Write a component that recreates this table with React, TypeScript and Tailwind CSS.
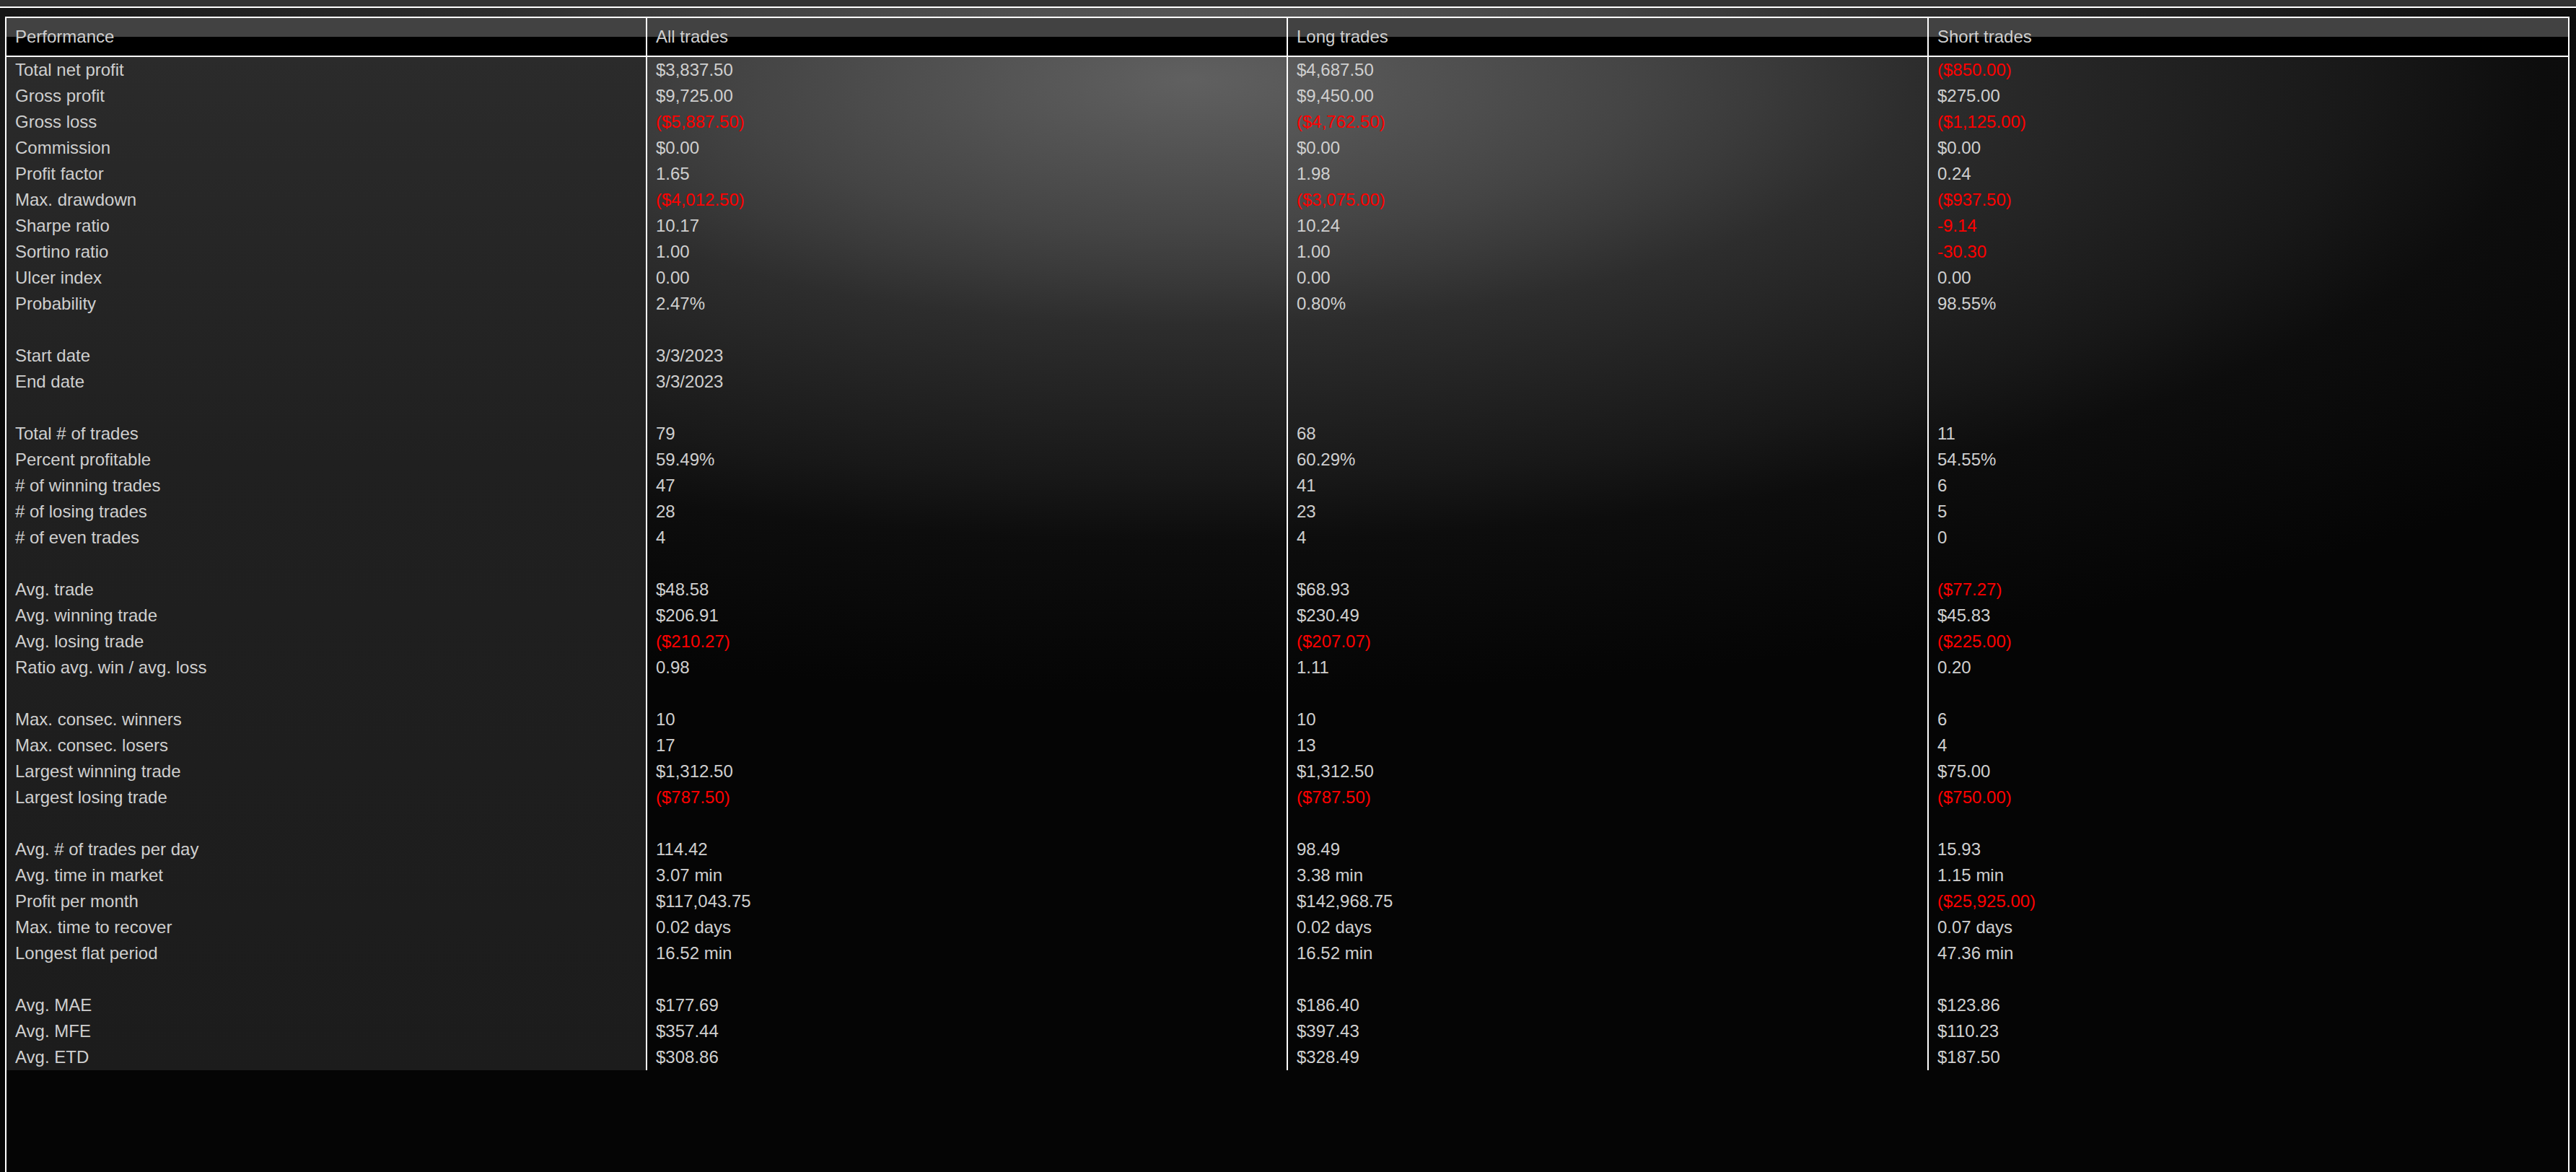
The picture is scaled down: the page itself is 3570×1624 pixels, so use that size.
import React from "react";

type Cell = { v: string; red?: boolean };
type Row = { label: string; cells: Cell[] } | null;

const c = (v: string, red = false): Cell => ({ v, red });

const rows: Row[] = [
  { label: "Total net profit", cells: [c("$3,837.50"), c("$4,687.50"), c("($850.00)", true)] },
  { label: "Gross profit", cells: [c("$9,725.00"), c("$9,450.00"), c("$275.00")] },
  { label: "Gross loss", cells: [c("($5,887.50)", true), c("($4,762.50)", true), c("($1,125.00)", true)] },
  { label: "Commission", cells: [c("$0.00"), c("$0.00"), c("$0.00")] },
  { label: "Profit factor", cells: [c("1.65"), c("1.98"), c("0.24")] },
  { label: "Max. drawdown", cells: [c("($4,012.50)", true), c("($3,075.00)", true), c("($937.50)", true)] },
  { label: "Sharpe ratio", cells: [c("10.17"), c("10.24"), c("-9.14", true)] },
  { label: "Sortino ratio", cells: [c("1.00"), c("1.00"), c("-30.30", true)] },
  { label: "Ulcer index", cells: [c("0.00"), c("0.00"), c("0.00")] },
  { label: "Probability", cells: [c("2.47%"), c("0.80%"), c("98.55%")] },
  null,
  { label: "Start date", cells: [c("3/3/2023"), c(""), c("")] },
  { label: "End date", cells: [c("3/3/2023"), c(""), c("")] },
  null,
  { label: "Total # of trades", cells: [c("79"), c("68"), c("11")] },
  { label: "Percent profitable", cells: [c("59.49%"), c("60.29%"), c("54.55%")] },
  { label: "# of winning trades", cells: [c("47"), c("41"), c("6")] },
  { label: "# of losing trades", cells: [c("28"), c("23"), c("5")] },
  { label: "# of even trades", cells: [c("4"), c("4"), c("0")] },
  null,
  { label: "Avg. trade", cells: [c("$48.58"), c("$68.93"), c("($77.27)", true)] },
  { label: "Avg. winning trade", cells: [c("$206.91"), c("$230.49"), c("$45.83")] },
  { label: "Avg. losing trade", cells: [c("($210.27)", true), c("($207.07)", true), c("($225.00)", true)] },
  { label: "Ratio avg. win / avg. loss", cells: [c("0.98"), c("1.11"), c("0.20")] },
  null,
  { label: "Max. consec. winners", cells: [c("10"), c("10"), c("6")] },
  { label: "Max. consec. losers", cells: [c("17"), c("13"), c("4")] },
  { label: "Largest winning trade", cells: [c("$1,312.50"), c("$1,312.50"), c("$75.00")] },
  { label: "Largest losing trade", cells: [c("($787.50)", true), c("($787.50)", true), c("($750.00)", true)] },
  null,
  { label: "Avg. # of trades per day", cells: [c("114.42"), c("98.49"), c("15.93")] },
  { label: "Avg. time in market", cells: [c("3.07 min"), c("3.38 min"), c("1.15 min")] },
  { label: "Profit per month", cells: [c("$117,043.75"), c("$142,968.75"), c("($25,925.00)", true)] },
  { label: "Max. time to recover", cells: [c("0.02 days"), c("0.02 days"), c("0.07 days")] },
  { label: "Longest flat period", cells: [c("16.52 min"), c("16.52 min"), c("47.36 min")] },
  null,
  { label: "Avg. MAE", cells: [c("$177.69"), c("$186.40"), c("$123.86")] },
  { label: "Avg. MFE", cells: [c("$357.44"), c("$397.43"), c("$110.23")] },
  { label: "Avg. ETD", cells: [c("$308.86"), c("$328.49"), c("$187.50")] },
];

const headers = ["Performance", "All trades", "Long trades", "Short trades"];

function Header({ text }: { text: string }) {
  return (
    <div className="h-[54px] border-b-2 border-white bg-[linear-gradient(180deg,#424242_50%,#000000_50%)] flex items-center pl-3 text-[#cfcfcf]">
      {text}
    </div>
  );
}

function Column({ index }: { index: number }) {
  const first = index === 0;
  return (
    <div className={first ? "flex-1 min-w-0" : "flex-1 min-w-0 border-l-2 border-white"}>
      <Header text={headers[index]} />
      <div className={first ? "bg-[linear-gradient(180deg,#2b2b2b_0%,#202020_40%,#1c1c1c_100%)]" : ""}>
        {rows.map((r, i) => {
          if (!r) return <div key={i} className="h-9" />;
          const cell = first ? { v: r.label, red: false } : r.cells[index - 1];
          return (
            <div
              key={i}
              className={
                "h-9 flex items-center pl-3 whitespace-nowrap " +
                (cell.red ? "text-[#ff0000]" : "text-[#cfcfcf]")
              }
            >
              {cell.v}
            </div>
          );
        })}
      </div>
    </div>
  );
}

export default function App() {
  return (
    <div
      className="h-[1624px] w-[3570px] overflow-hidden flex flex-col bg-black text-[24px] leading-none"
      style={{ fontFamily: '"Liberation Sans", Arial, sans-serif' }}
    >
      <div className="h-[9px] bg-[#333333] shrink-0" />
      <div className="h-[2px] bg-white shrink-0" />
      <div className="flex-1 flex flex-col pt-3 pl-[7px] pr-[9px] bg-[radial-gradient(2500px_850px_at_1650px_100px,#606060_0%,#444444_25%,#3a3a3a_32%,#2d2d2d_40%,#181818_65%,#0d0d0d_75%,#050505_100%)]">
        <div className="flex-1 border-t-2 border-x-2 border-white">
          <div className="flex items-start">
            {[0, 1, 2, 3].map((i) => (
              <Column key={i} index={i} />
            ))}
          </div>
        </div>
      </div>
    </div>
  );
}
